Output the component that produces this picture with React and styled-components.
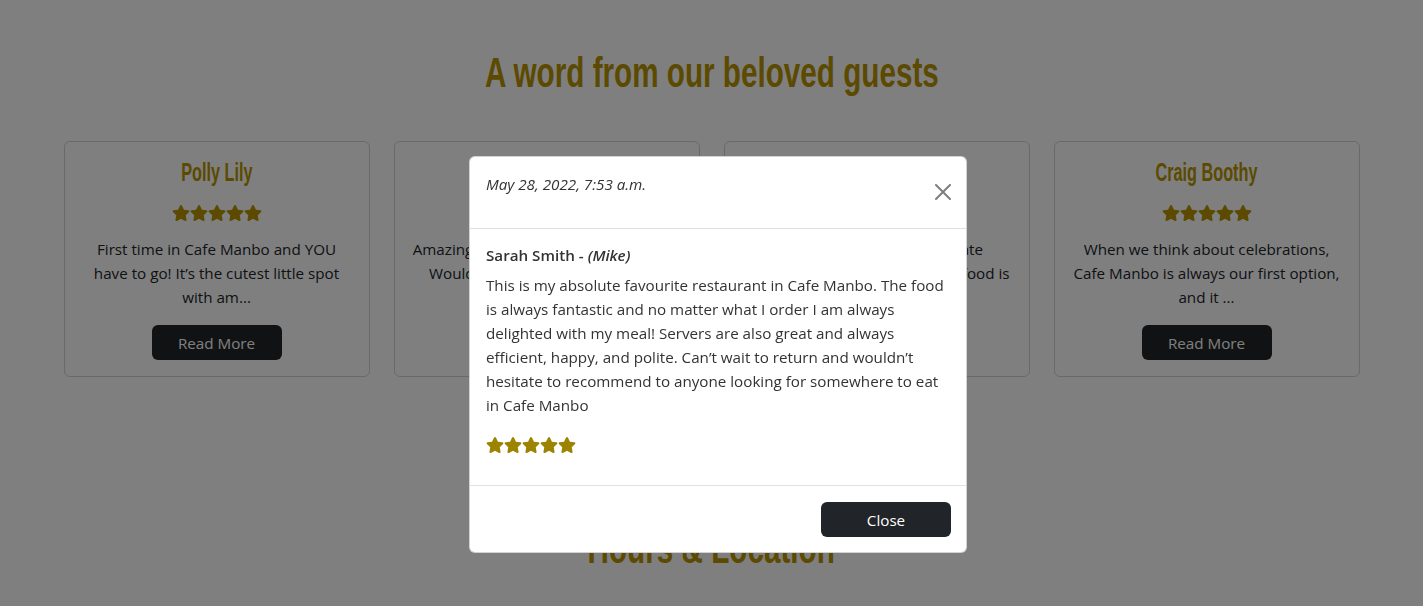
import React from "react";
import styled, { createGlobalStyle } from "styled-components";

const GlobalStyle = createGlobalStyle`
  * { box-sizing: border-box; }
  html, body { margin: 0; padding: 0; background: #ffffff; }
  body {
    font-family: "Open Sans", "Noto Sans", sans-serif;
    font-size: 15.2px;
    line-height: 24px;
    color: #212529;
  }
`;

const GOLD = "#b69400";

const Page = styled.main`
  display: flex;
  flex-direction: column;
  align-items: center;
`;

const Section = styled.section`
  width: 100%;
  display: flex;
  flex-direction: column;
  align-items: center;
  padding-top: ${(p) => p.$top}px;
`;

const Heading = styled.h2`
  margin: 0;
  font-family: "Liberation Sans", Arial, sans-serif;
  font-weight: 700;
  font-size: 43px;
  line-height: 48px;
  color: ${GOLD};
  white-space: nowrap;
  transform: scaleX(0.69);
  transform-origin: center;
  text-align: center;
`;

const CardGrid = styled.div`
  width: 1296px;
  margin-top: 45px;
  display: grid;
  grid-template-columns: repeat(4, 1fr);
  gap: 24px;
`;

const Card = styled.article`
  border: 1px solid rgba(0, 0, 0, 0.175);
  border-radius: 6px;
  padding: 17px 16px 16px;
  display: flex;
  flex-direction: column;
  align-items: center;
  text-align: center;
`;

const CardName = styled.h3`
  margin: 0 0 16px;
  font-family: "Liberation Sans", Arial, sans-serif;
  font-weight: 700;
  font-size: 25px;
  line-height: 26px;
  color: ${GOLD};
  white-space: nowrap;
  transform: scaleX(0.65);
  transform-origin: center;
`;

const Stars = styled.div`
  display: flex;
  justify-content: ${(p) => (p.$left ? "flex-start" : "center")};
  height: 24px;
  align-items: center;
  color: ${(p) => p.$color};
`;

const CardText = styled.p`
  margin: 12px 0 16px;
  color: #212529;
`;

const DarkButton = styled.button`
  width: 130px;
  height: 35px;
  border: none;
  border-radius: 6px;
  background: #212529;
  color: #ffffff;
  font-family: inherit;
  font-size: 15.2px;
  line-height: 24px;
  padding: 0;
  cursor: pointer;
`;

const Backdrop = styled.div`
  position: fixed;
  inset: 0;
  background: rgba(0, 0, 0, 0.5);
`;

const ModalLayer = styled.div`
  position: fixed;
  inset: 0;
  display: flex;
  justify-content: center;
  align-items: flex-start;
  padding: 156px 0 0 13px;
`;

const Dialog = styled.div`
  width: 498px;
  background: #ffffff;
  border: 1px solid rgba(0, 0, 0, 0.175);
  border-radius: 6px;
  display: flex;
  flex-direction: column;
  color: #333333;
`;

const ModalHeader = styled.header`
  display: flex;
  align-items: center;
  justify-content: space-between;
  padding: 15px 16px 16px;
  border-bottom: 1px solid #dee2e6;
`;

const DateText = styled.p`
  margin: 0 0 16px;
  font-style: italic;
  color: #333;
`;

const CloseX = styled.button`
  width: 24px;
  height: 24px;
  padding: 4px;
  margin-right: -5px;
  border: none;
  background: transparent;
  color: #000;
  opacity: 0.5;
  display: flex;
  align-items: center;
  justify-content: center;
  cursor: pointer;
`;

const ModalBody = styled.div`
  padding: 17px 16px 28px;
  border-bottom: 1px solid #dee2e6;
`;

const Author = styled.p`
  margin: 0 0 8px;
  font-weight: 600;
  line-height: 19px;
  color: #333;
`;

const Review = styled.p`
  margin: 0 0 16px;
  color: #333;
`;

const ModalFooter = styled.footer`
  display: flex;
  justify-content: flex-end;
  padding: 16px 15px 15px;
`;

const Star = () => (
  <svg width="18" height="16" viewBox="0 0 576 512" fill="currentColor" aria-hidden="true">
    <path d="M259.3 17.8L194 150.2 47.9 171.5c-26.2 3.8-36.7 36.1-17.7 54.6l105.7 103-25 145.5c-4.5 26.3 23.2 46 46.4 33.7L288 439.6l130.7 68.7c23.2 12.2 50.9-7.4 46.4-33.7l-25-145.5 105.7-103c19-18.5 8.5-50.8-17.7-54.6L382 150.2 316.7 17.8c-11.7-23.6-45.6-23.9-57.4 0z" />
  </svg>
);

const FiveStars = ({ color, left }) => (
  <Stars $color={color} $left={left}>
    {[0, 1, 2, 3, 4].map((i) => (
      <Star key={i} />
    ))}
  </Stars>
);

const reviews = [
  { name: "Polly Lily", text: "First time in Cafe Manbo and YOU have to go! It’s the cutest little spot with am..." },
  { name: "Sarah Smith", text: "Amazing food and service, very lovely. Would definitely recommend this restaurant..." },
  { name: "Tom Baker", text: "Such a wonderful and delicate atmosphere and staff, and the food is always..." },
  { name: "Craig Boothy", text: "When we think about celebrations, Cafe Manbo is always our first option, and it ..." },
];

export default function App() {
  return (
    <>
      <GlobalStyle />
      <Page>
        <Section $top={48}>
          <Heading>A word from our beloved guests</Heading>
          <CardGrid>
            {reviews.map((r) => (
              <Card key={r.name}>
                <CardName>{r.name}</CardName>
                <FiveStars color={GOLD} />
                <CardText>{r.text}</CardText>
                <DarkButton>Read More</DarkButton>
              </Card>
            ))}
          </CardGrid>
        </Section>
        <Section $top={147}>
          <Heading>Hours &amp; Location</Heading>
        </Section>
      </Page>
      <Backdrop />
      <ModalLayer>
        <Dialog>
          <ModalHeader>
            <DateText>May 28, 2022, 7:53 a.m.</DateText>
            <CloseX aria-label="Close">
              <svg width="16" height="16" viewBox="0 0 16 16" fill="currentColor">
                <path d="M.293.293a1 1 0 0 1 1.414 0L8 6.586 14.293.293a1 1 0 1 1 1.414 1.414L9.414 8l6.293 6.293a1 1 0 0 1-1.414 1.414L8 9.414l-6.293 6.293a1 1 0 0 1-1.414-1.414L6.586 8 .293 1.707a1 1 0 0 1 0-1.414z" />
              </svg>
            </CloseX>
          </ModalHeader>
          <ModalBody>
            <Author>
              Sarah Smith - <em>(Mike)</em>
            </Author>
            <Review>
              This is my absolute favourite restaurant in Cafe Manbo. The food is always fantastic and no matter
              what I order I am always delighted with my meal! Servers are also great and always efficient, happy,
              and polite. Can’t wait to return and wouldn’t hesitate to recommend to anyone looking for somewhere
              to eat in Cafe Manbo
            </Review>
            <FiveStars color="#9c8300" left />
          </ModalBody>
          <ModalFooter>
            <DarkButton>Close</DarkButton>
          </ModalFooter>
        </Dialog>
      </ModalLayer>
    </>
  );
}
